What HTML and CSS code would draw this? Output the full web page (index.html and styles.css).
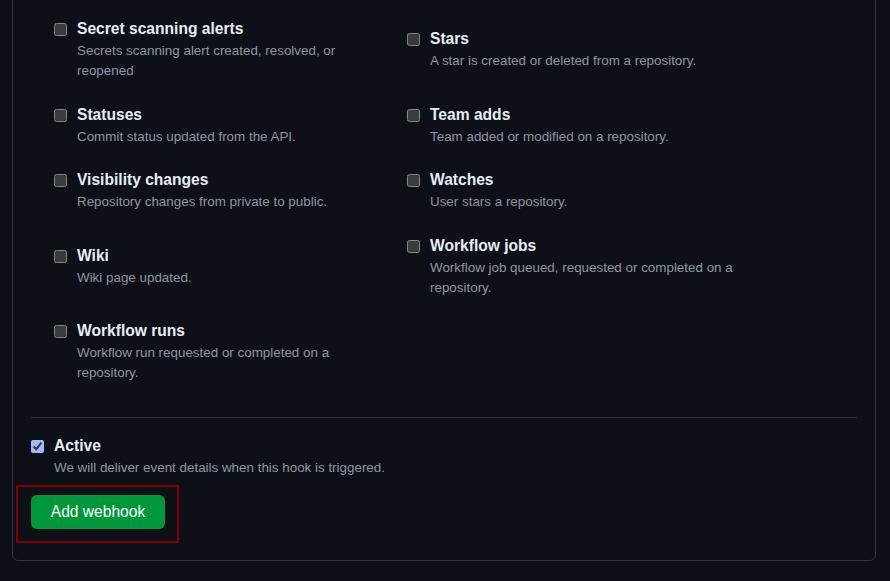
FILE: index.html
```html
<!DOCTYPE html>
<html lang="en">
<head>
<meta charset="utf-8">
<title>Add webhook</title>
<link rel="stylesheet" href="styles.css">
</head>
<body>
<div class="box">
  <div class="events">
    <label class="item">
      <input type="checkbox" class="cb">
      <span class="text"><span class="title">Secret scanning alerts</span><span class="note">Secrets scanning alert created, resolved, or reopened</span></span>
    </label>
    <label class="item">
      <input type="checkbox" class="cb">
      <span class="text"><span class="title">Stars</span><span class="note">A star is created or deleted from a repository.</span></span>
    </label>
    <label class="item">
      <input type="checkbox" class="cb">
      <span class="text"><span class="title">Statuses</span><span class="note">Commit status updated from the API.</span></span>
    </label>
    <label class="item">
      <input type="checkbox" class="cb">
      <span class="text"><span class="title">Team adds</span><span class="note">Team added or modified on a repository.</span></span>
    </label>
    <label class="item">
      <input type="checkbox" class="cb">
      <span class="text"><span class="title">Visibility changes</span><span class="note">Repository changes from private to public.</span></span>
    </label>
    <label class="item">
      <input type="checkbox" class="cb">
      <span class="text"><span class="title">Watches</span><span class="note">User stars a repository.</span></span>
    </label>
    <label class="item">
      <input type="checkbox" class="cb">
      <span class="text"><span class="title">Wiki</span><span class="note">Wiki page updated.</span></span>
    </label>
    <label class="item">
      <input type="checkbox" class="cb">
      <span class="text"><span class="title">Workflow jobs</span><span class="note">Workflow job queued, requested or completed on a repository.</span></span>
    </label>
    <label class="item">
      <input type="checkbox" class="cb">
      <span class="text"><span class="title">Workflow runs</span><span class="note">Workflow run requested or completed on a repository.</span></span>
    </label>
  </div>

  <div class="active">
    <label class="item">
      <input type="checkbox" class="cb" checked>
      <span class="text"><span class="title">Active</span><span class="note">We will deliver event details when this hook is triggered.</span></span>
    </label>
    <div class="actions">
      <button type="submit" class="btn-primary">Add webhook</button>
      <span class="highlight"></span>
    </div>
  </div>
</div>
</body>
</html>
```

FILE: styles.css
```css
* { box-sizing: border-box; }

html, body {
  margin: 0;
  padding: 0;
  background: #0d1117;
  color-scheme: dark;
}

body {
  font-family: "Liberation Sans", Arial, Helvetica, sans-serif;
  height: 581px;
  overflow: hidden;
}

.box {
  margin: -10px 14px 0 12px;
  width: 864px;
  border: 1px solid #30363d;
  border-radius: 6px;
  padding: 27px 18px 31px 18px;
}

.events {
  display: grid;
  grid-template-columns: 333px 333px;
  column-gap: 20px;
  row-gap: 22.5px;
  align-items: center;
  margin-left: 23px;
}

.item {
  display: flex;
  align-items: flex-start;
  gap: 10px;
  cursor: pointer;
}

.cb {
  margin: 5px 0 0 0;
  width: 13px;
  height: 13px;
  flex: 0 0 13px;
  accent-color: #a4baf6;
}

.text {
  display: flex;
  flex-direction: column;
  max-width: 310px;
}

.title {
  font-size: 15.6px;
  font-weight: bold;
  line-height: 22px;
  color: #e6edf3;
}

.note {
  margin-top: 1px;
  font-size: 13.4px;
  line-height: 20px;
  color: #8d96a0;
}

.active {
  margin-top: 34px;
  border-top: 1px solid #282e36;
  padding-top: 17px;
}

.active .text {
  max-width: none;
}

.actions {
  position: relative;
  margin-top: 17px;
  display: flex;
}

.btn-primary {
  height: 34px;
  width: 134px;
  padding: 0;
  border: 0;
  border-radius: 6px;
  background: #01973b;
  color: #ffffff;
  font-family: "Liberation Sans", Arial, Helvetica, sans-serif;
  font-size: 15.6px;
  line-height: 34px;
  cursor: pointer;
}

.highlight {
  position: absolute;
  left: -15px;
  top: -10px;
  width: 163px;
  height: 58px;
  border: 2px solid #840000;
  pointer-events: none;
}
```
